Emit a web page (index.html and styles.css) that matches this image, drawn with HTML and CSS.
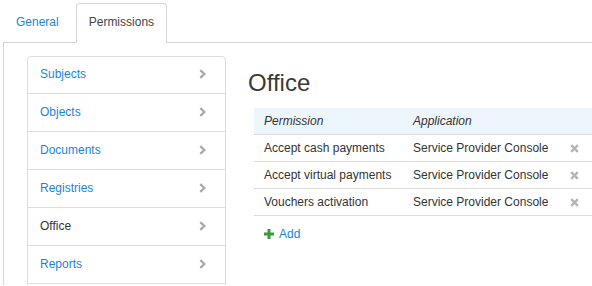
FILE: index.html
```html
<!DOCTYPE html>
<html>
<head>
<meta charset="utf-8">
<link rel="stylesheet" href="styles.css">
</head>
<body>
<div class="tabs">
  <a class="tab">General</a>
  <a class="tab active">Permissions</a>
</div>
<div class="content">
  <ul class="menu">
    <li class="item link">Subjects<svg class="chev" width="7" height="10" viewBox="0 0 7 10"><polyline points="1.3,1.2 5.3,5 1.3,8.8" fill="none" stroke="#aaa" stroke-width="2.4"/></svg></li>
    <li class="item link">Objects<svg class="chev" width="7" height="10" viewBox="0 0 7 10"><polyline points="1.3,1.2 5.3,5 1.3,8.8" fill="none" stroke="#aaa" stroke-width="2.4"/></svg></li>
    <li class="item link">Documents<svg class="chev" width="7" height="10" viewBox="0 0 7 10"><polyline points="1.3,1.2 5.3,5 1.3,8.8" fill="none" stroke="#aaa" stroke-width="2.4"/></svg></li>
    <li class="item link">Registries<svg class="chev" width="7" height="10" viewBox="0 0 7 10"><polyline points="1.3,1.2 5.3,5 1.3,8.8" fill="none" stroke="#aaa" stroke-width="2.4"/></svg></li>
    <li class="item">Office<svg class="chev" width="7" height="10" viewBox="0 0 7 10"><polyline points="1.3,1.2 5.3,5 1.3,8.8" fill="none" stroke="#aaa" stroke-width="2.4"/></svg></li>
    <li class="item link">Reports<svg class="chev" width="7" height="10" viewBox="0 0 7 10"><polyline points="1.3,1.2 5.3,5 1.3,8.8" fill="none" stroke="#aaa" stroke-width="2.4"/></svg></li>
    <li class="item"></li>
  </ul>
  <div class="main">
    <h1 class="title">Office</h1>
    <div class="perms" role="table">
      <div class="row head" role="row"><span role="columnheader">Permission</span><span role="columnheader">Application</span><span></span></div>
      <div class="row" role="row"><span role="cell">Accept cash payments</span><span role="cell">Service Provider Console</span><span class="rm"><svg width="9" height="9" viewBox="0 0 9 9"><path d="M1.2 1.2 L7.8 7.8 M7.8 1.2 L1.2 7.8" stroke="#b5b5b5" stroke-width="2.4"/></svg></span></div>
      <div class="row" role="row"><span role="cell">Accept virtual payments</span><span role="cell">Service Provider Console</span><span class="rm"><svg width="9" height="9" viewBox="0 0 9 9"><path d="M1.2 1.2 L7.8 7.8 M7.8 1.2 L1.2 7.8" stroke="#b5b5b5" stroke-width="2.4"/></svg></span></div>
      <div class="row" role="row"><span role="cell">Vouchers activation</span><span role="cell">Service Provider Console</span><span class="rm"><svg width="9" height="9" viewBox="0 0 9 9"><path d="M1.2 1.2 L7.8 7.8 M7.8 1.2 L1.2 7.8" stroke="#b5b5b5" stroke-width="2.4"/></svg></span></div>
    </div>
    <div class="add"><svg width="10" height="10" viewBox="0 0 10 10"><rect x="3.5" y="0" width="3" height="10" fill="#3c9a3c"/><rect x="0" y="3.5" width="10" height="3" fill="#3c9a3c"/></svg><span>Add</span></div>
  </div>
</div>
</body>
</html>
```
FILE: styles.css
```css
* { box-sizing: border-box; }
html, body { margin: 0; padding: 0; background: #fff; }
body {
  width: 592px;
  height: 286px;
  overflow: hidden;
  font-family: "Liberation Sans", Arial, sans-serif;
  font-size: 12px;
  color: #333;
}
.tabs {
  display: flex;
  gap: 4px;
  margin-left: 3px;
  padding-top: 3px;
  border-bottom: 1px solid #d5d5d5;
}
.tab {
  display: block;
  padding: 10px 12px 12px;
  line-height: 16px;
  border: 1px solid transparent;
  border-bottom: none;
  border-radius: 4px 4px 0 0;
  margin-bottom: -1px;
  color: #1a85d6;
}
.tab.active {
  background: #fff;
  border-color: #d5d5d5;
  color: #444;
  height: 40px;
}
.content {
  display: flex;
  margin-left: 3px;
  border-left: 1px solid #d5d5d5;
  padding: 13px 0 0 23px;
  height: 242px;
  overflow: hidden;
}
.menu {
  list-style: none;
  margin: 0;
  padding: 0;
  width: 199px;
  flex: none;
  border: 1px solid #ddd;
  border-radius: 4px;
  align-self: flex-start;
}
.item {
  display: flex;
  align-items: center;
  justify-content: space-between;
  height: 38px;
  padding: 0 19px 2px 12px;
  border-bottom: 1px solid #ddd;
  color: #333;
}
.item:first-child { height: 37px; }
.item.link { color: #1a85d6; }
.main {
  flex: 1;
  padding-left: 22px;
  min-width: 0;
}
.title {
  margin: 13px 0 11px;
  font-size: 24px;
  line-height: 28px;
  font-weight: normal;
  color: #3a3a3a;
}
.perms {
  margin-left: 6px;
  width: 338px;
}
.row {
  display: grid;
  grid-template-columns: 159px 1fr 36px;
  align-items: center;
  height: 27px;
  border-bottom: 1px solid #ddd;
  white-space: nowrap;
}
.row > span:first-child { padding-left: 10px; }
.row.head {
  background: #edf6fc;
  font-style: italic;
}
.rm { padding-left: 14px; }
.rm svg { display: block; }
.add {
  display: flex;
  align-items: center;
  gap: 5px;
  margin: 10px 0 0 16px;
  line-height: 16px;
  color: #1a85d6;
}
.add svg { display: block; }
```
